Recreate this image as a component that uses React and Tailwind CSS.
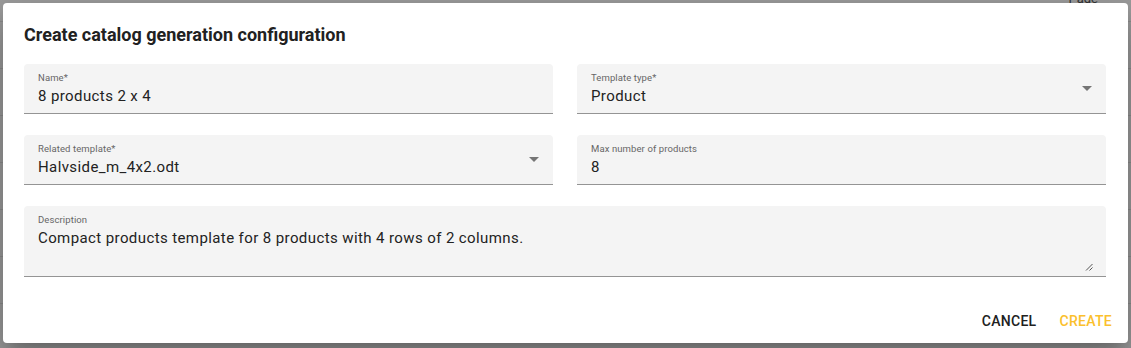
import React from "react";

const font = { fontFamily: "Roboto, 'Liberation Sans', sans-serif" };

function Arrow() {
  return (
    <svg width="10" height="5" viewBox="0 0 10 5" className="shrink-0">
      <path d="M0 0l5 5 5-5z" fill="#757575" />
    </svg>
  );
}

function Field({ label, value, select }) {
  return (
    <div className="flex h-[50px] items-start rounded-t-[4px] border-b border-[#949494] bg-[#f4f4f4] pl-[14px] pr-[14px]">
      <div className="flex min-w-0 flex-1 flex-col pt-[8px]">
        <div className="h-[12px] text-[9.5px] leading-[12px] tracking-[0.1px] text-[#666666]">{label}</div>
        <div className="h-[19px] pt-[3px] text-[15px] leading-[19px] tracking-[0.4px] text-[#222222]">{value}</div>
      </div>
      {select && (
        <div className="flex h-[49px] items-center">
          <Arrow />
        </div>
      )}
    </div>
  );
}

export default function App() {
  const rows = [0, 1, 2, 3, 4, 5, 6, 7];
  return (
    <div className="relative h-[348px] w-[1131px] overflow-hidden bg-[#9d9d9d]" style={font}>
      <div className="flex flex-col">
        <div className="h-[22px] border-b border-[#8e8e8e]" />
        {rows.map((r) => (
          <div key={r} className="h-[47px] border-b border-[#8e8e8e]" />
        ))}
      </div>
      <div className="absolute right-[33px] top-[-11px] text-[13px] text-[#333]">Page</div>
      <div className="absolute left-[3px] top-[3px] flex h-[340px] w-[1125px] flex-col rounded-[4px] bg-white pl-[21px] pr-[22px] shadow-[0_11px_15px_-7px_rgba(0,0,0,0.2),0_24px_38px_3px_rgba(0,0,0,0.14),0_9px_46px_8px_rgba(0,0,0,0.12)]">
        <div className="pt-[16px] text-[18px] font-bold leading-[32px] text-[#212121]">
          Create catalog generation configuration
        </div>
        <div className="mt-[13px] grid grid-cols-2 gap-x-[24px] gap-y-[21px]">
          <Field label="Name*" value="8 products 2 x 4" />
          <Field label="Template type*" value="Product" select />
          <Field label="Related template*" value="Halvside_m_4x2.odt" select />
          <Field label="Max number of products" value="8" />
          <div className="relative col-span-2 flex h-[71px] flex-col rounded-t-[4px] border-b border-[#949494] bg-[#f4f4f4] pl-[14px] pr-[14px] pt-[8px]">
            <div className="h-[12px] text-[9.5px] leading-[12px] tracking-[0.1px] text-[#666666]">Description</div>
            <div className="h-[19px] pt-[3px] text-[15px] leading-[19px] tracking-[0.4px] text-[#222222]">
              Compact products template for 8 products with 4 rows of 2 columns.
            </div>
            <svg width="8" height="8" viewBox="0 0 8 8" className="absolute bottom-[5px] right-[13px]">
              <path d="M1 7.5L7.5 1M4.5 7.5L7.5 4.5" stroke="#555" strokeWidth="1" />
            </svg>
          </div>
        </div>
        <div className="-mr-[14px] mt-[26px] flex justify-end gap-[7px]">
          <button className="h-[36px] px-[8px] text-[14px] font-medium uppercase tracking-[0.3px] text-[#212121]">
            Cancel
          </button>
          <button className="h-[36px] px-[8px] text-[14px] font-medium uppercase tracking-[0.3px] text-[#fbc02d]">
            Create
          </button>
        </div>
      </div>
    </div>
  );
}
